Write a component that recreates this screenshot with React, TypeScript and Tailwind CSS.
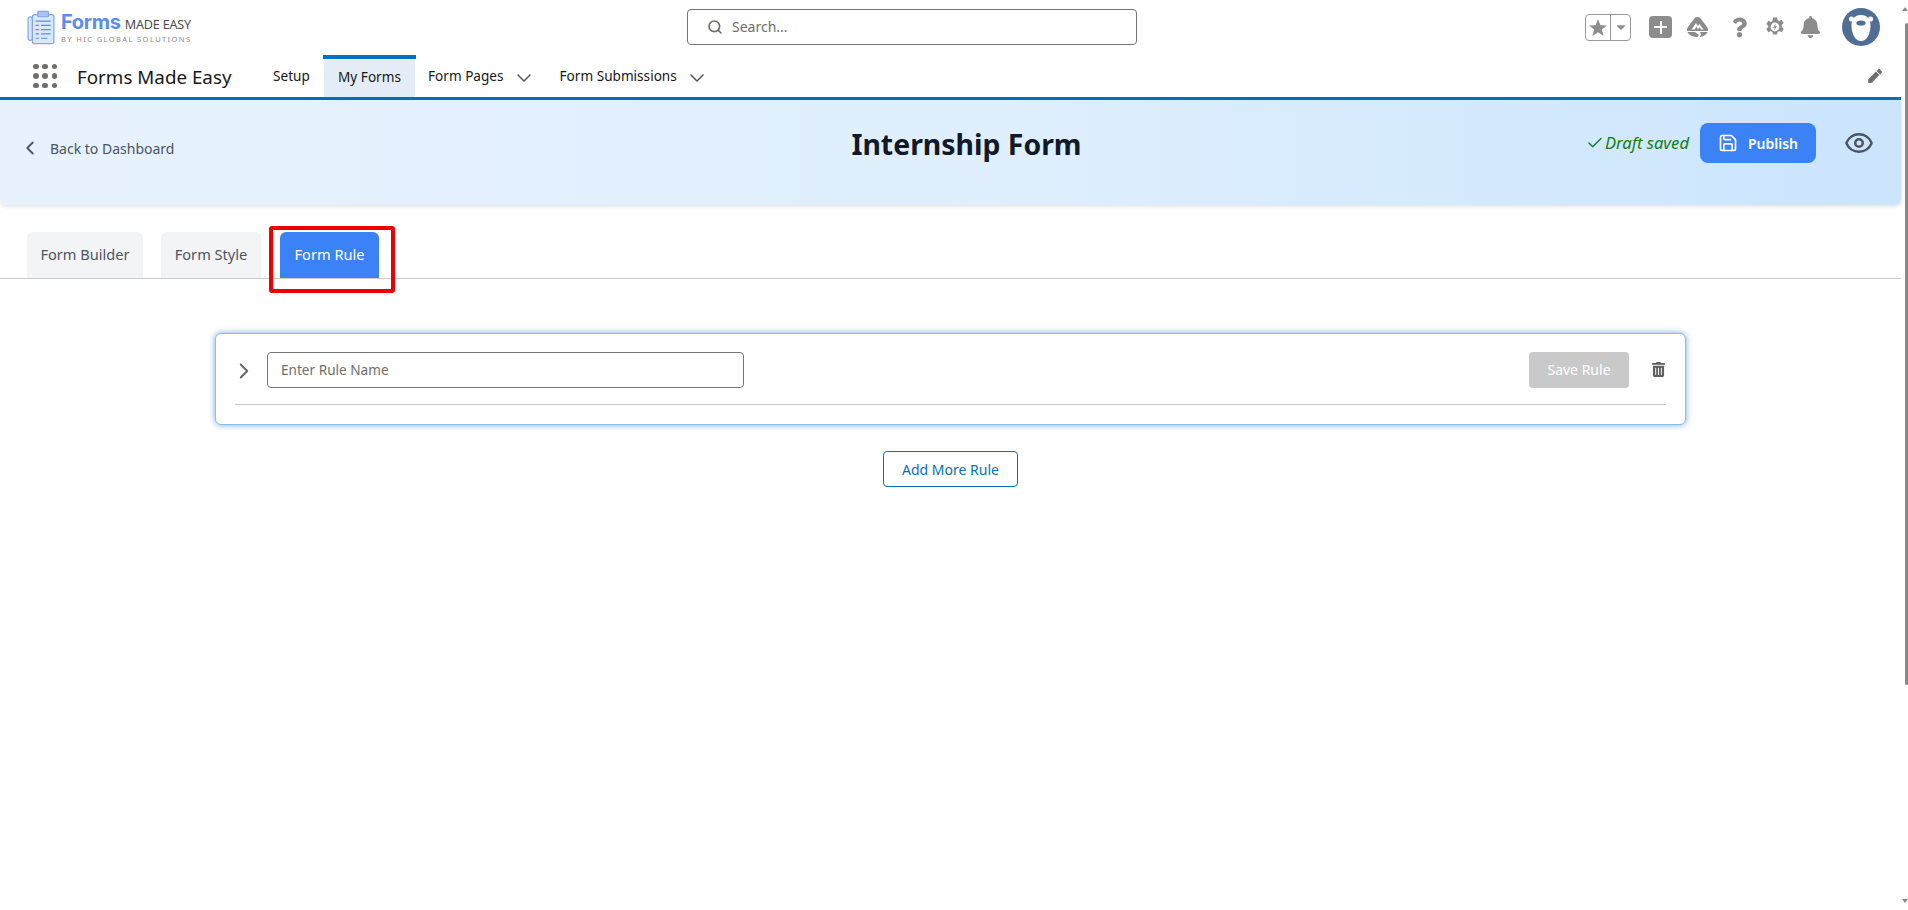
import { Check, ChevronDown, ChevronLeft, ChevronRight, Eye, Save, Search } from 'lucide-react';
import { FaBell, FaCaretDown, FaPen, FaQuestion, FaTrashAlt } from 'react-icons/fa';

const font = { fontFamily: '"Noto Sans", "Open Sans", Arial, sans-serif' };

// ─── Logo ───
function LogoMark() {
  return (
    <svg width="28" height="35" viewBox="0 0 26 32" fill="none" stroke="#7ea6e8" strokeWidth="1.1">
      <rect x="1" y="6" width="4" height="22" rx="2" fill="#dbe7fa" />
      <rect x="5" y="4" width="20" height="27" rx="2" fill="#dbe7fa" />
      <rect x="10" y="1" width="10" height="5" rx="1" fill="#a9c4f0" />
      <path d="M8 10h14M8 14h3M13 14h9M8 18h3M13 18h9M8 22h3M13 22h9M8 26h3M13 26h6" stroke="#5b8dea" />
    </svg>
  );
}

function Logo() {
  return (
    <div className="flex items-center gap-[6px] pl-[27px] w-[687px] shrink-0">
      <LogoMark />
      <div className="flex flex-col pt-[3px]">
        <div className="flex items-baseline gap-[4px] leading-[19px]">
          <span className="text-[20px] font-bold text-[#5b8dea] tracking-[-0.3px]" style={{ fontFamily: '"Inter", sans-serif' }}>Forms</span>
          <span className="text-[12.6px] text-[#4a4a4a] tracking-[-0.2px]">MADE EASY</span>
        </div>
        <span className="text-[7.5px] leading-[10px] text-[#8b8b8b] tracking-[1.4px] whitespace-nowrap">BY HIC GLOBAL SOLUTIONS</span>
      </div>
    </div>
  );
}

// ─── Salesforce-ish header icons ───
function StarIcon() {
  return (
    <svg width="18" height="17" viewBox="0 0 18 17" fill="#8c8c8c">
      <path d="M9 0l2.4 6.2 6.6.3-5.2 4.1 1.8 6.4L9 13.3 3.4 17l1.8-6.4L0 6.5l6.6-.3z" />
    </svg>
  );
}

function TrailheadIcon() {
  return (
    <svg width="23" height="22" viewBox="0 0 23 22" fill="#8c8c8c">
      <path d="M11.5 1 C14 1 15 3 16.5 5 C18.5 8 21 10 22 13 L22 15 L1 15 L1 13 C2 10 4.5 8 6.5 5 C8 3 9 1 11.5 1 Z" />
      <path d="M1.5 16 L9 16 L13 19 L11.5 21 C8 21 3 20 1.5 16 Z" />
      <path d="M14 16 L21.5 16 C20.5 19 17 20.5 13.5 21 L15 18.5 Z" />
      <path d="M5.5 13.5 L10 7 L12 10 L13.5 8 L17.5 13.5 L15 13.5 L13.5 11 L12 13.5 L10.5 10.5 L8.5 13.5 Z" fill="#fff" />
    </svg>
  );
}

function SetupIcon() {
  return (
    <svg width="20" height="20" viewBox="0 0 20 20">
      <path
        fill="#8c8c8c"
        d="M8 0.5h4l.6 2.6 1.7.8 2.4-1.2 2 3.4-2 1.8v2.2l2 1.8-2 3.4-2.4-1.2-1.7.8-.6 2.6H8l-.6-2.6-1.7-.8-2.4 1.2-2-3.4 2-1.8V8.9l-2-1.8 2-3.4 2.4 1.2 1.7-.8z"
      />
      <circle cx="10" cy="10" r="4.4" fill="#fff" />
      <path d="M11 6.6 7.8 10.8h2l-.9 2.8 3.3-4.4h-2z" fill="#8c8c8c" />
    </svg>
  );
}

function BearAvatar() {
  return (
    <svg width="38" height="38" viewBox="0 0 38 38">
      <circle cx="19" cy="19" r="19" fill="#506d96" />
      <circle cx="9.5" cy="11" r="2.6" fill="#fff" />
      <circle cx="28.5" cy="11" r="2.6" fill="#fff" />
      <path d="M19 7c6.5 0 9.5 4.5 9.5 10.5 0 8-3.5 15.5-9.5 15.5s-9.5-7.5-9.5-15.5C9.5 11.500 12.500 7 19 7z" fill="#fff" />
      <ellipse cx="19" cy="15" rx="4.6" ry="2.6" fill="#506d96" />
    </svg>
  );
}

function TopBar() {
  return (
    <div className="h-[55px] flex items-center shrink-0 pb-[1px]">
      <Logo />
      <div className="w-[450px] h-[36px] shrink-0 flex items-center gap-[9px] pl-[19px] border border-[#747474] rounded-[4px] text-[14px] text-[#706e6b]">
        <Search className="w-[16px] h-[16px] text-[#706e6b]" strokeWidth={2.4} />
        <span className="pb-[1px]">Search...</span>
      </div>
      <div className="ml-[448px] flex items-center">
        <div className="w-[46px] h-[27px] flex border border-[#9a9a9a] rounded-[4px] text-[#8c8c8c]">
          <div className="w-[25px] flex items-center justify-center border-r border-[#9a9a9a]">
            <StarIcon />
          </div>
          <div className="flex-1 flex items-center justify-center">
            <FaCaretDown className="w-[14px] h-[14px]" />
          </div>
        </div>
        <div className="ml-[18px] w-[23px] h-[22px] rounded-[4px] bg-[#8c8c8c] flex items-center justify-center">
          <span className="relative block w-[13px] h-[13px]">
            <span className="absolute left-[5.5px] top-0 w-[2px] h-[13px] bg-white" />
            <span className="absolute left-0 top-[5.5px] w-[13px] h-[2px] bg-white" />
          </span>
        </div>
        <div className="ml-[14px]"><TrailheadIcon /></div>
        <FaQuestion className="ml-[23px] w-[15px] h-[21px] text-[#8c8c8c]" />
        <div className="ml-[18px]"><SetupIcon /></div>
        <FaBell className="ml-[15px] w-[21px] h-[22px] text-[#8c8c8c]" />
        <div className="ml-[21px]"><BearAvatar /></div>
      </div>
    </div>
  );
}

// ─── App nav ───
function AppGrid() {
  return (
    <div className="grid grid-cols-3 gap-[4px] w-[24px]">
      {[0, 1, 2, 3, 4, 5, 6, 7, 8].map((i) => (
        <span key={i} className="w-[5.5px] h-[5.5px] rounded-full bg-[#706e6b]" />
      ))}
    </div>
  );
}

function NavBar() {
  return (
    <div className="h-[45px] flex items-stretch border-b-[3px] border-[#0070c0] shrink-0 text-[13.6px] text-[#181818]">
      <div className="pl-[33px] w-[273px] shrink-0 flex items-center gap-[20px]">
        <AppGrid />
        <span className="text-[18.8px] leading-none whitespace-nowrap pt-[3px]">Forms Made Easy</span>
      </div>
      <div className="w-[50px] flex items-center pt-[1px]">Setup</div>
      <div className="w-[93px] border-t-[4px] border-[#0070c0] flex justify-center items-center pb-[2px] bg-[linear-gradient(90deg,#fff_1px,#e4edf7_1px,#e4edf7_92px,#fff_92px)]">
        My Forms
      </div>
      <div className="pl-[12px] flex items-center gap-[8px] pt-[1px]">
        Form Pages
        <ChevronDown className="w-[24px] h-[24px] mt-[2px] text-[#555]" strokeWidth={1.5} />
      </div>
      <div className="pl-[24px] flex items-center gap-[8px] pt-[1px]">
        Form Submissions
        <ChevronDown className="w-[24px] h-[24px] mt-[2px] text-[#555]" strokeWidth={1.5} />
      </div>
      <div className="ml-auto pr-[19px] flex items-center">
        <FaPen className="w-[14px] h-[14px] text-[#706e6b]" />
      </div>
    </div>
  );
}

// ─── Form header ───
function FormHeader() {
  return (
    <div className="h-[105px] shrink-0 flex items-start pl-[19px] pr-[27px] rounded-b-[6px] bg-gradient-to-r from-[#e7f2fd] via-[#e0effd] to-[#cbe5fd] shadow-[0_1px_4px_rgba(0,0,0,0.15)]">
      <div className="w-[328px] shrink-0 flex items-center gap-[9px] h-[48px] mt-[24px] text-[14px] text-[#4b5563]">
        <ChevronLeft className="w-[22px] h-[22px]" strokeWidth={2} />
        <span>Back to Dashboard</span>
      </div>
      <h1 className="flex-1 text-center text-[28.4px] font-bold text-[#111827] leading-[40px] mt-[24px]">Internship Form</h1>
      <div className="flex items-center mt-[23px]">
        <Check className="w-[18px] h-[18px] text-[#15803d]" strokeWidth={2} />
        <span className="ml-[1px] text-[16.6px] italic text-[#118011]">Draft saved</span>
        <button className="ml-[11px] w-[116px] h-[40px] rounded-[8px] bg-[#3b82f6] flex items-center justify-center gap-[10px] text-[14px] font-semibold text-white">
          <Save className="w-[20px] h-[20px]" strokeWidth={2} />
          Publish
        </button>
        <Eye className="ml-[28px] w-[30px] h-[30px] text-[#4b5563]" strokeWidth={2} />
      </div>
    </div>
  );
}

// ─── Tabs ───
function Tabs() {
  return (
    <div className="relative mt-[27px] h-[47px] shrink-0 flex items-stretch pl-[27px] border-b border-[#cccccc] text-[14.6px]">
      <div className="w-[116px] bg-[#f3f4f6] rounded-t-[6px] flex items-center justify-center text-[#4b5563]">Form Builder</div>
      <div className="ml-[18px] w-[100px] bg-[#f3f4f6] rounded-t-[6px] flex items-center justify-center text-[#4b5563]">Form Style</div>
      <div className="ml-[19px] w-[99px] bg-[#3b82f6] rounded-t-[6px] flex items-center justify-center text-white">Form Rule</div>
      {/* annotation from the original screenshot */}
      <div className="absolute left-[269px] top-[-6px] w-[126px] h-[67px] border-[4px] border-[#ee0000] rounded-[3px]" />
    </div>
  );
}

// ─── Rule card ───
function RuleCard() {
  return (
    <div className="mt-[54px] ml-[215px] w-[1471px] h-[92px] bg-white rounded-[6px] border border-[#8fbdea] shadow-[0_0_6px_rgba(70,140,220,0.75)] px-[19px] pt-[18px]">
      <div className="flex items-center h-[36px]">
        <ChevronRight className="w-[26px] h-[26px] ml-[-4px] mt-[2px] text-[#666]" strokeWidth={1.8} />
        <div className="ml-[10px] w-[477px] h-[36px] border border-[#747474] rounded-[4px] flex items-center pl-[13px] text-[13.6px] text-[#706e6b]">
          Enter Rule Name
        </div>
        <button className="ml-auto mr-[23px] w-[100px] h-[36px] rounded-[4px] bg-[#c9c9c9] pb-[1px] text-[14px] text-white">Save Rule</button>
        <FaTrashAlt className="mr-[1px] mb-[2px] w-[13px] h-[15px] text-[#606060]" />
      </div>
      <div className="mt-[16px] border-t border-[#c9c9c9]" />
    </div>
  );
}

function Scrollbar() {
  return (
    <div className="w-[7px] shrink-0 h-full flex flex-col items-end">
      <div className="mt-[7px] w-0 h-0 border-x-[3px] border-x-transparent border-b-[4px] border-b-[#8a8a8a]" />
      <div className="mt-[12px] w-[3px] h-[662px] rounded-full bg-[#8a8a8a]" />
      <div className="mt-auto mb-[7px] w-0 h-0 border-x-[3px] border-x-transparent border-t-[4px] border-t-[#8a8a8a]" />
    </div>
  );
}

export default function App() {
  return (
    <div className="w-[1908px] h-[910px] flex overflow-hidden bg-white" style={font}>
      <div className="flex-1 min-w-0 flex flex-col">
        <TopBar />
        <NavBar />
        <FormHeader />
        <Tabs />
        <RuleCard />
        <div className="mt-[26px] flex justify-center">
          <button className="w-[135px] h-[36px] bg-white border border-[#0b6fb8] rounded-[4px] text-[14px] text-[#0b6fb8]">Add More Rule</button>
        </div>
      </div>
      <Scrollbar />
    </div>
  );
}
